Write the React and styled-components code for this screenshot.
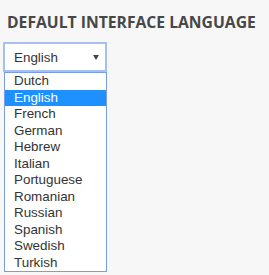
import React from 'react';
import styled, { createGlobalStyle } from 'styled-components';

const GlobalStyle = createGlobalStyle`
  html, body {
    margin: 0;
    padding: 0;
    background: #f7f7f7;
  }
`

const StyledPanel = styled.div`
  width: 269px;
  height: 275px;
  padding: 12px 0 0 3px;
  box-sizing: border-box;
  background: #f7f7f7;
  display: flex;
  flex-direction: column;
  align-items: flex-start;
`

const StyledHeading = styled.h4`
  margin: 0 0 0 4px;
  font-family: "Open Sans", sans-serif;
  font-weight: 700;
  font-size: 15.7px;
  line-height: 20px;
  color: #474747;
  text-transform: uppercase;
`

const StyledSelect = styled.div`
  margin-top: 10px;
  width: 104px;
  height: 30px;
  box-sizing: border-box;
  border: 2px solid #a4bff0;
  background: #fff;
  display: flex;
  align-items: center;
  justify-content: space-between;
  padding: 0 6px 0 9px;
  font-family: "Liberation Sans", Arial, sans-serif;
  font-size: 13.4px;
  color: #333;
`

const Caret = styled.span`
  width: 0;
  height: 0;
  border-left: 3.5px solid transparent;
  border-right: 3.5px solid transparent;
  border-top: 5px solid #444;
`

const StyledList = styled.ul`
  list-style: none;
  margin: 0 0 0 1px;
  padding: 0;
  width: 103px;
  box-sizing: border-box;
  border: 1px solid #7b9ee3;
  background: #fff;
`

const Option = styled.li`
  height: 16.5px;
  line-height: 16.5px;
  padding-left: 9px;
  font-family: "Liberation Sans", Arial, sans-serif;
  font-size: 13.4px;
  color: ${props => props.selected ? '#fff' : '#333'};
  background: ${props => props.selected ? '#1e90ff' : 'transparent'};
`

const languages = [
  'Dutch', 'English', 'French', 'German', 'Hebrew', 'Italian',
  'Portuguese', 'Romanian', 'Russian', 'Spanish', 'Swedish', 'Turkish'
];

const App = () => {
  const current = 'English';

  return (
    <>
      <GlobalStyle />
      <StyledPanel>
        <StyledHeading>Default Interface Language</StyledHeading>
        <StyledSelect>
          <span>{current}</span>
          <Caret />
        </StyledSelect>
        <StyledList>
          {languages.map((lang) => (
            <Option key={lang} selected={lang === current}>{lang}</Option>
          ))}
        </StyledList>
      </StyledPanel>
    </>
  )
}

export default App;
